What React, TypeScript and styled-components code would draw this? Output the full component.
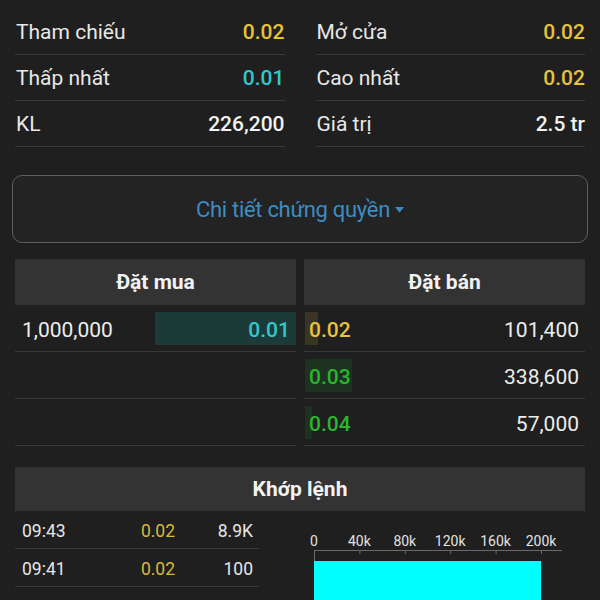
import React from "react";
import styled, { createGlobalStyle } from "styled-components";

const Global = createGlobalStyle`
  html, body { margin: 0; padding: 0; background: #1f1f1f; overflow: hidden; }
  body { font-family: Roboto, "Noto Sans", sans-serif; color: #ececec; }
  * { box-sizing: border-box; }
`;

const C = {
  yellow: "#e7c23a",
  cyan: "#33c7cc",
  green: "#2bb52e",
  white: "#f2f2f2",
  line: "#383838",
  head: "#333333",
};

const Page = styled.div`
  width: 600px;
  height: 600px;
  padding: 9px 15px 0;
  background: #1f1f1f;
`;

const StatsGrid = styled.div`
  display: grid;
  grid-template-columns: 1fr 1fr;
  column-gap: 31px;
`;

const StatCol = styled.div`
  display: flex;
  flex-direction: column;
`;

const StatRow = styled.div`
  height: 46px;
  border-bottom: 1px solid ${C.line};
  display: flex;
  align-items: center;
  justify-content: space-between;
  font-size: 21px;
  padding: 1px 0 0 1px;
`;

const Label = styled.span`
  color: #e8e8e8;
`;

const Value = styled.span<{ $c: string }>`
  color: ${(p) => p.$c};
  font-weight: 500;
`;

const DetailButton = styled.button`
  margin: 28px -3px 0;
  width: calc(100% + 6px);
  height: 68px;
  background: #232323;
  border: 1px solid #5e5e5e;
  border-radius: 10px;
  display: flex;
  align-items: center;
  justify-content: center;
  gap: 5px;
  font-family: Roboto, sans-serif;
  font-size: 22px;
  letter-spacing: -0.3px;
  color: #3d8cc2;
  padding: 0;
`;

const Book = styled.div`
  margin-top: 16px;
  display: grid;
  grid-template-columns: 1fr 1fr;
  column-gap: 8px;
`;

const Side = styled.div`
  display: flex;
  flex-direction: column;
`;

const Header = styled.div<{ $h?: number }>`
  height: ${(p) => p.$h ?? 46}px;
  background: ${C.head};
  display: flex;
  align-items: center;
  justify-content: center;
  font-size: 21px;
  font-weight: 700;
  color: ${C.white};
`;

const BookRow = styled.div<{ $side: "buy" | "sell" }>`
  position: relative;
  height: 47px;
  border-bottom: 1px solid ${C.line};
  display: flex;
  align-items: center;
  justify-content: space-between;
  padding: ${(p) => (p.$side === "buy" ? "4px 6px 0 7px" : "4px 6px 0 5px")};
  font-size: 21px;
  &:first-of-type {
    margin-top: 1px;
  }
`;

const Depth = styled.div<{ $side: "buy" | "sell"; $tone: string }>`
  position: absolute;
  top: 7px;
  bottom: 6px;
  ${(p) => (p.$side === "buy" ? "right: 0;" : "left: 1px;")}
  background: ${(p) => p.$tone};
`;

const Cell = styled.span<{ $c?: string; $w?: number }>`
  position: relative;
  color: ${(p) => p.$c ?? "#ededed"};
  font-weight: ${(p) => p.$w ?? 400};
`;

const Match = styled.div`
  margin-top: 21px;
`;

const MatchBody = styled.div`
  display: grid;
  grid-template-columns: 244px 1fr;
`;

const TradeList = styled.div`
  display: flex;
  flex-direction: column;
`;

const TradeRow = styled.div`
  height: 38px;
  border-bottom: 1px solid ${C.line};
  display: grid;
  grid-template-columns: 1fr 62px 78px;
  align-items: center;
  padding: 2px 6px 0 7px;
  font-size: 17.5px;
  color: #e6e6e6;
`;

const TCell = styled.span<{ $align?: string; $c?: string }>`
  text-align: ${(p) => p.$align ?? "left"};
  color: ${(p) => p.$c ?? "#e6e6e6"};
`;

const ChartBox = styled.div`
  height: 90px;
`;

const Caret = () => (
  <svg width="9" height="6" viewBox="0 0 9 6" style={{ marginTop: 2 }}>
    <path d="M0 0 H9 L4.5 5.5 Z" fill="#3d8cc2" />
  </svg>
);

const stats = [
  [
    { l: "Tham chiếu", v: "0.02", c: C.yellow },
    { l: "Thấp nhất", v: "0.01", c: C.cyan },
    { l: "KL", v: "226,200", c: C.white },
  ],
  [
    { l: "Mở cửa", v: "0.02", c: C.yellow },
    { l: "Cao nhất", v: "0.02", c: C.yellow },
    { l: "Giá trị", v: "2.5 tr", c: C.white },
  ],
];

const buys = [{ q: "1,000,000", p: "0.01", c: C.cyan, w: 50.2, tone: "#1c3a38" }, null, null];
const sells = [
  { q: "101,400", p: "0.02", c: C.yellow, w: 4.7, tone: "#3a3522" },
  { q: "338,600", p: "0.03", c: C.green, w: 16.8, tone: "#1d3320" },
  { q: "57,000", p: "0.04", c: C.green, w: 2.6, tone: "#1d3320" },
];

const trades = [
  { t: "09:43", p: "0.02", v: "8.9K" },
  { t: "09:41", p: "0.02", v: "100" },
];

const Chart = () => {
  const x0 = 55;
  const step = 45.4;
  const ticks = ["0", "40k", "80k", "120k", "160k", "200k"];
  return (
    <svg width="326" height="90" viewBox="0 0 326 90">
      {ticks.map((t, i) => (
        <text
          key={t}
          x={x0 + i * step}
          y={35}
          textAnchor="middle"
          fontFamily="Roboto, sans-serif"
          fontSize="14"
          fill="#e2e2e2"
        >
          {t}
        </text>
      ))}
      <line x1={x0} y1={39.5} x2={303} y2={39.5} stroke="#6a6a6a" strokeWidth="1" />
      {ticks.map((t, i) => (
        <line
          key={"k" + t}
          x1={x0 + i * step + 0.5}
          y1={40}
          x2={x0 + i * step + 0.5}
          y2={i === 0 ? 50 : 43}
          stroke="#6a6a6a"
          strokeWidth="1"
        />
      ))}
      <rect x={x0} y={50} width={227} height={40} fill="#00ffff" />
    </svg>
  );
};

export default function App() {
  return (
    <>
      <Global />
      <Page>
        <StatsGrid>
          {stats.map((col, i) => (
            <StatCol key={i}>
              {col.map((s) => (
                <StatRow key={s.l}>
                  <Label>{s.l}</Label>
                  <Value $c={s.c}>{s.v}</Value>
                </StatRow>
              ))}
            </StatCol>
          ))}
        </StatsGrid>

        <DetailButton>
          Chi tiết chứng quyền <Caret />
        </DetailButton>

        <Book>
          <Side>
            <Header>Đặt mua</Header>
            {buys.map((b, i) => (
              <BookRow key={i} $side="buy">
                {b && (
                  <>
                    <Depth $side="buy" $tone={b.tone} style={{ width: `${b.w}%` }} />
                    <Cell>{b.q}</Cell>
                    <Cell $c={b.c} $w={500}>
                      {b.p}
                    </Cell>
                  </>
                )}
              </BookRow>
            ))}
          </Side>
          <Side>
            <Header>Đặt bán</Header>
            {sells.map((s, i) => (
              <BookRow key={i} $side="sell">
                <Depth $side="sell" $tone={s.tone} style={{ width: `${s.w}%` }} />
                <Cell $c={s.c} $w={500}>
                  {s.p}
                </Cell>
                <Cell>{s.q}</Cell>
              </BookRow>
            ))}
          </Side>
        </Book>

        <Match>
          <Header $h={44}>Khớp lệnh</Header>
          <MatchBody>
            <TradeList>
              {trades.map((t) => (
                <TradeRow key={t.t}>
                  <TCell>{t.t}</TCell>
                  <TCell $align="right" $c="#d9b93a">
                    {t.p}
                  </TCell>
                  <TCell $align="right">{t.v}</TCell>
                </TradeRow>
              ))}
            </TradeList>
            <ChartBox>
              <Chart />
            </ChartBox>
          </MatchBody>
        </Match>
      </Page>
    </>
  );
}
